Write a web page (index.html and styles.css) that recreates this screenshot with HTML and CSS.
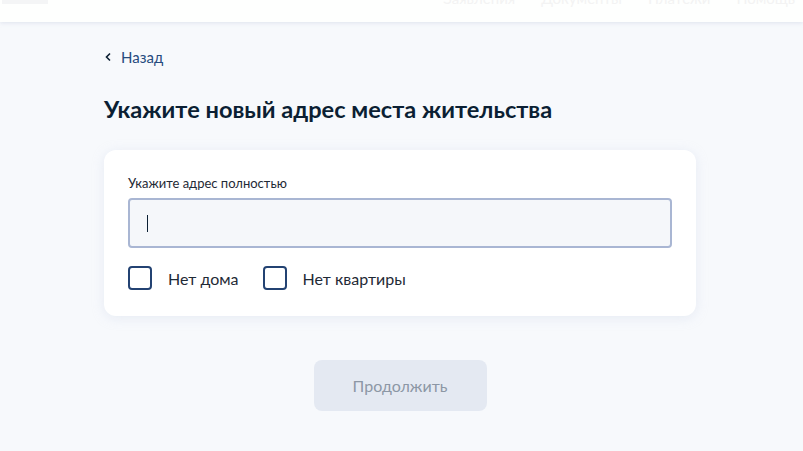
FILE: index.html
```html
<!DOCTYPE html>
<html lang="ru">
<head>
<meta charset="UTF-8">
<meta name="viewport" content="width=device-width, initial-scale=1.0">
<title>Смена адреса</title>
<link rel="stylesheet" href="styles.css">
</head>
<body>

<header class="header">
    <div class="header-logo"></div>
    <nav class="header-nav">
        <a href="#">Заявления</a>
        <a href="#">Документы</a>
        <a href="#">Платежи</a>
        <a href="#">Помощь</a>
    </nav>
</header>

<main class="page">
    <a class="back-link" href="#">
        <svg width="8" height="10" viewBox="0 0 8 10"><path d="M6 1.5 2.5 5 6 8.5" fill="none" stroke="#0b1f33" stroke-width="1.6"/></svg>
        Назад
    </a>

    <h1 class="title">Укажите новый адрес места жительства</h1>

    <form class="card" id="addressForm">
        <label class="field-label" for="address">Укажите адрес полностью</label>
        <div class="input-box">
            <input type="text" id="address" name="address">
            <span class="caret"></span>
        </div>
        <div class="checks">
            <label class="check"><input type="checkbox" name="noHouse"><span class="box"></span>Нет дома</label>
            <label class="check"><input type="checkbox" name="noFlat"><span class="box"></span>Нет квартиры</label>
        </div>
    </form>

    <div class="actions">
        <button class="btn" type="button" disabled>Продолжить</button>
    </div>
</main>

</body>
</html>
```

FILE: styles.css
```css
body {
    font-family: Lato, "Noto Sans", Arial, sans-serif;
    margin: 0;
    padding: 0;
    background-color: #f7f9fc;
    color: #0b1f33;
}
.header {
    height: 22px;
    background-color: #fefffe;
    box-shadow: 0 1px 4px rgba(180, 190, 215, 0.35);
    display: flex;
    justify-content: space-between;
    overflow: hidden;
    padding: 0 8px 0 2px;
}
.header-logo {
    width: 46px;
    height: 4px;
    background-color: #f4f5f6;
}
.header-nav {
    display: flex;
    gap: 26px;
    margin-top: -11px;
}
.header-nav a {
    color: #f3f3f3;
    text-decoration: none;
    font-size: 15px;
}
.page {
    width: 592px;
    margin-left: 104px;
    padding-top: 24px;
}
.back-link {
    display: inline-flex;
    align-items: center;
    gap: 9px;
    color: #264b7e;
    text-decoration: none;
    font-size: 15px;
    line-height: 20px;
}
.title {
    margin: 26px 0 0;
    font-size: 23.6px;
    line-height: 32px;
    font-weight: bold;
    color: #0b1f33;
}
.card {
    margin-top: 25px;
    background-color: #fff;
    border-radius: 12px;
    box-shadow: 0 2px 12px rgba(200, 210, 230, 0.35);
    padding: 25px 24px 26px;
}
.field-label {
    display: block;
    font-size: 13px;
    line-height: 16px;
    color: #1f2a36;
    margin-bottom: 7px;
}
.input-box {
    position: relative;
    height: 50px;
    box-sizing: border-box;
    border: 2px solid #a9b6d3;
    border-radius: 4px;
    background-color: #f5f7fa;
}
.input-box input {
    width: 100%;
    height: 100%;
    border: none;
    background: transparent;
    outline: none;
    box-sizing: border-box;
    padding: 0 16px;
    font-size: 16px;
    font-family: inherit;
}
.caret {
    position: absolute;
    left: 17px;
    top: 15px;
    width: 1px;
    height: 17px;
    background-color: #0b1f33;
}
.checks {
    display: flex;
    gap: 24px;
    margin-top: 18px;
}
.check {
    display: flex;
    align-items: center;
    gap: 16px;
    font-size: 16px;
    color: #1f2a36;
    cursor: pointer;
}
.check input {
    display: none;
}
.box {
    width: 24px;
    height: 24px;
    box-sizing: border-box;
    border: 2px solid #234272;
    border-radius: 4px;
}
.actions {
    display: flex;
    justify-content: center;
    margin-top: 44px;
}
.btn {
    width: 173px;
    height: 51px;
    border: none;
    border-radius: 8px;
    background-color: #e4e9f2;
    color: #8c97a5;
    font-size: 16px;
    font-family: inherit;
}
```
